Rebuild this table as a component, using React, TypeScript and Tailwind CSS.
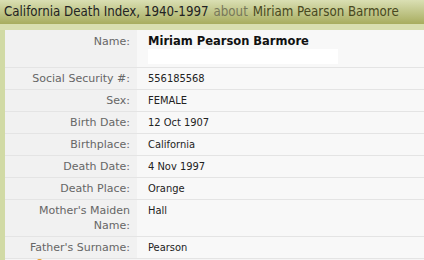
import React from 'react';

type Row = { label: string; value: string };

const rows: Row[] = [
  { label: 'Social Security #:', value: '556185568' },
  { label: 'Sex:', value: 'FEMALE' },
  { label: 'Birth Date:', value: '12 Oct 1907' },
  { label: 'Birthplace:', value: 'California' },
  { label: 'Death Date:', value: '4 Nov 1997' },
  { label: 'Death Place:', value: 'Orange' },
  { label: "Mother's Maiden Name:", value: 'Hall' },
  { label: "Father's Surname:", value: 'Pearson' },
];

const condensed = { fontFamily: '"DejaVu Sans Condensed", "DejaVu Sans", Verdana, sans-serif' };
const wide = { fontFamily: '"DejaVu Sans", Verdana, sans-serif' };

const RecordRow: React.FC<{ row: Row }> = ({ row }) => (
  <div className="flex border-b border-[#e4e4e4]">
    <div
      className="w-[132px] shrink-0 bg-[#f1f1f1] pl-5 pr-[7px] py-[3px] text-right text-[#666] text-[11px] leading-[15px]"
      style={wide}
    >
      {row.label}
    </div>
    <div className="flex-1 bg-[#f8f8f8] pl-[11px] py-[3px] text-[#222] text-[11px] leading-[15px]">
      {row.value}
    </div>
  </div>
);

export default function App() {
  return (
    <div className="w-[424px] h-[260px] overflow-hidden bg-[#d1daa5]" style={condensed}>
      {/* Title bar */}
      <div className="h-[24px] px-1 flex items-center bg-gradient-to-b from-[#dadfb3] to-[#a8ad5e] text-[13.2px] whitespace-nowrap">
        <span className="text-[#222]">California Death Index, 1940-1997</span>
        <span className="text-[#77775a] ml-[5px]">about</span>
        <span className="text-[#48481e] ml-[5px]">Miriam Pearson Barmore</span>
      </div>

      <div className="h-[6px] bg-[#d9dfb0]" />

      {/* Record table */}
      <div className="ml-[5px] bg-[#f5f5f5]">
        <div className="flex border-b border-[#e4e4e4]">
          <div
            className="w-[132px] shrink-0 bg-[#f1f1f1] pr-[7px] pt-[4px] pb-[3px] text-right text-[#666] text-[11px] leading-[15px]"
            style={wide}
          >
            Name:
          </div>
          <div className="flex-1 bg-[#f8f8f8] pl-[11px] pt-[4px] pb-[3px]">
            <div className="font-bold text-[#111] text-[11.5px] leading-[15px]" style={wide}>
              Miriam Pearson Barmore
            </div>
            <div className="w-[190px] h-[15px] bg-white" />
          </div>
        </div>
        {rows.map((r) => (
          <RecordRow key={r.label} row={r} />
        ))}
        <div className="relative h-[10px] bg-[#f5f5f5]">
          <div className="absolute left-[32px] top-0 w-[5px] h-[4px] rounded-full bg-[#e8a030]" />
        </div>
      </div>
    </div>
  );
}
